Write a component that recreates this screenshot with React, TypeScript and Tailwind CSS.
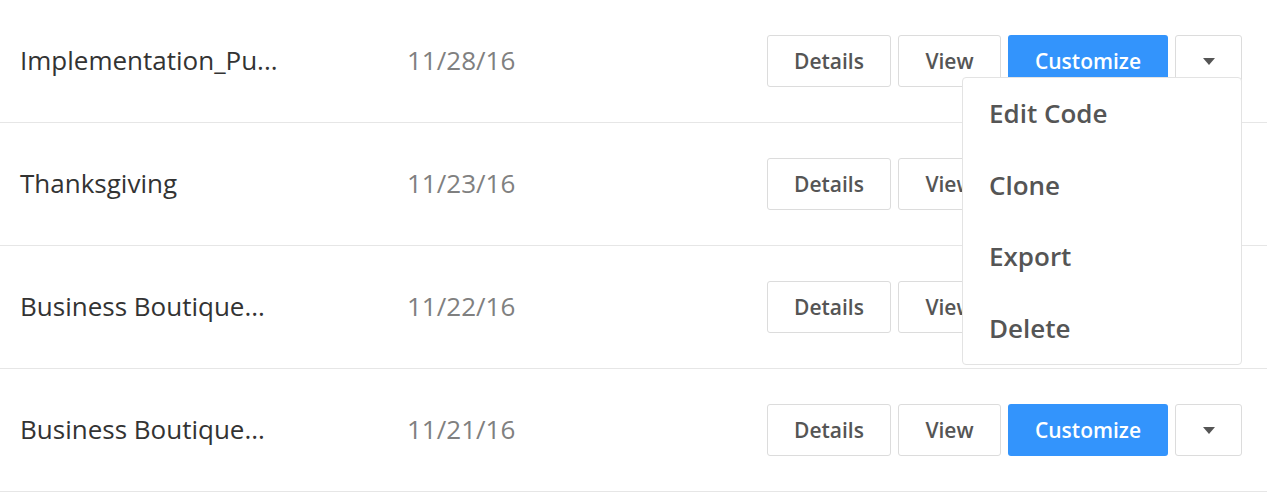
import React from "react";

const rows = [
  { name: "Implementation_Pu...", date: "11/28/16", open: true },
  { name: "Thanksgiving", date: "11/23/16" },
  { name: "Business Boutique...", date: "11/22/16" },
  { name: "Business Boutique...", date: "11/21/16" },
];

function Caret() {
  return (
    <svg width="12" height="7" viewBox="0 0 12 7">
      <path d="M0 0 L12 0 L6 7 Z" fill="#555555" />
    </svg>
  );
}

export default function App() {
  return (
    <div
      className="w-[1267px] h-[494px] bg-white overflow-hidden"
      style={{ fontFamily: '"Open Sans", sans-serif' }}
    >
      {rows.map((r, i) => (
        <div
          key={i}
          className="h-[123px] border-b border-[#e6e6e6] flex items-center pl-[20px] pr-[25px]"
        >
          <div className="w-[387px] text-[26px] text-[#333333] -mt-[2px]">{r.name}</div>
          <div className="text-[26px] text-[#808080] -mt-[2px]">{r.date}</div>
          <div className="ml-auto flex gap-[7px] relative">
            <button className="w-[124px] h-[52px] pt-[2px] border border-[#dcdcdc] rounded-[3px] bg-white text-[21px] font-semibold text-[#555555]">
              Details
            </button>
            <button className="w-[103px] h-[52px] pt-[2px] border border-[#dcdcdc] rounded-[3px] bg-white text-[21px] font-semibold text-[#555555]">
              View
            </button>
            <button className="w-[160px] h-[52px] pt-[2px] rounded-[3px] bg-[#3394fc] text-[21px] font-semibold text-white">
              Customize
            </button>
            <button className="w-[67px] h-[52px] border border-[#dcdcdc] rounded-[3px] bg-white flex items-center justify-center">
              <Caret />
            </button>
            {r.open && (
              <div className="absolute right-0 top-[42px] w-[280px] h-[288px] bg-white border border-[#e3e3e3] rounded-[4px] z-10 flex flex-col">
                {["Edit Code", "Clone", "Export", "Delete"].map((t) => (
                  <div
                    key={t}
                    className="h-[72px] flex items-center pl-[26px] text-[26px] font-semibold text-[#555555]"
                  >
                    {t}
                  </div>
                ))}
              </div>
            )}
          </div>
        </div>
      ))}
    </div>
  );
}
